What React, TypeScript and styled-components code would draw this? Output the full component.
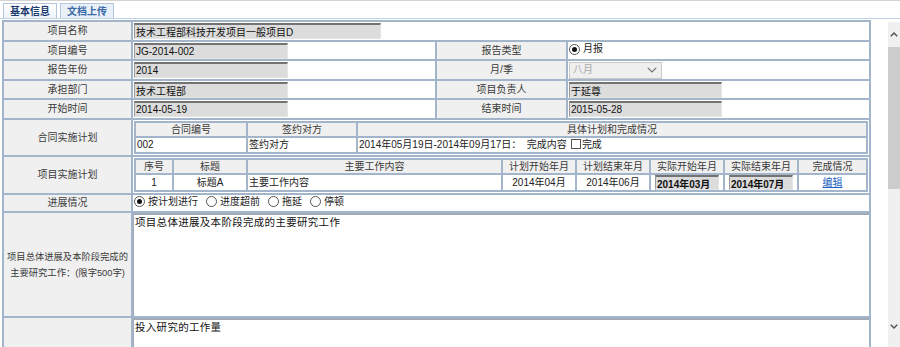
import React from "react";
import styled, { createGlobalStyle } from "styled-components";

const GlobalStyle = createGlobalStyle`
  html, body { margin: 0; padding: 0; background: #fff; overflow: hidden; }
  body {
    font-family: "Liberation Sans", "Noto Sans CJK SC", sans-serif;
    font-size: 10px;
    line-height: 12px;
    color: #222;
  }
  * { box-sizing: border-box; }
`;

const BORDER = "#a3b5cb";

const Page = styled.div`
  width: 900px;
  height: 347px;
  overflow: hidden;
  display: flex;
  flex-direction: column;
`;

const TabBar = styled.div`
  height: 19px;
  padding: 2px 0 0 3px;
  border-top: 1px solid #d4d4d4;
  border-bottom: 1px solid #c3d3e6;
  display: flex;
  gap: 3px;
  align-items: flex-end;
`;

const Tab = styled.div<{ $active?: boolean }>`
  width: 54px;
  height: 15px;
  border: 1px solid #b4c6dc;
  border-bottom: none;
  background: ${(p) => (p.$active ? "linear-gradient(#ffffff, #eef3f9)" : "#e9f0f8")};
  color: ${(p) => (p.$active ? "#1b3a6d" : "#3b6aa6")};
  font-weight: bold;
  font-size: 10px;
  line-height: 14px;
  text-align: center;
  font-family: "Noto Sans CJK SC", sans-serif;
`;

const Body = styled.div`
  flex: 1;
  display: flex;
  min-height: 0;
`;

const Content = styled.div`
  width: 871px;
  padding: 1px 0 0 2px;
  overflow: hidden;
`;

const Spacer = styled.div`
  flex: 1;
`;

const Scrollbar = styled.div`
  width: 12px;
  margin-top: 3px;
  background: #f0f0f0;
  display: flex;
  flex-direction: column;
`;

const ScrollArrow = styled.div<{ $h: number }>`
  height: ${(p) => p.$h}px;
  display: flex;
  align-items: center;
  justify-content: center;
`;

const ScrollThumb = styled.div`
  height: 142px;
  background: #cdcdcd;
`;

const ScrollTrack = styled.div`
  flex: 1;
`;

const FormTable = styled.table`
  width: 867px;
  border-collapse: collapse;
  table-layout: fixed;
  border: 2px solid #93a8c2;
`;

const Cell = styled.td<{ $h?: number; $pad?: string }>`
  border: 2px solid ${BORDER};
  padding: ${(p) => p.$pad ?? "0 1px"};
  height: ${(p) => (p.$h ? `${p.$h}px` : "auto")};
  vertical-align: middle;
  background: #fff;
`;

const LabelCell = styled(Cell)<{ $size?: number }>`
  background: #f0f0f0;
  text-align: center;
  color: #3a3a3a;
  font-size: ${(p) => p.$size ?? 10}px;
  line-height: 16px;
  white-space: nowrap;
`;

const TextBox = styled.input<{ $w: number; $bold?: boolean; $h?: number }>`
  display: block;
  width: ${(p) => p.$w}px;
  height: ${(p) => p.$h ?? 16}px;
  margin: 0;
  padding: 0 1px;
  background: #dcdcdc;
  border: none;
  border-top: 2px solid #737373;
  border-left: 1px solid #9a9a9a;
  border-right: 1px solid #e4e4e4;
  border-bottom: 1px solid #e4e4e4;
  font-family: "Liberation Sans", "Noto Sans CJK SC", sans-serif;
  font-size: 10px;
  font-weight: ${(p) => (p.$bold ? "bold" : "normal")};
  color: #111;
  outline: none;
`;

const SubTable = styled.table`
  width: 100%;
  border-collapse: collapse;
  table-layout: fixed;
`;

const SubHead = styled.td`
  background: #f0f0f0;
  border: 2px solid ${BORDER};
  text-align: center;
  height: 15px;
  padding: 0;
  font-size: 10px;
  line-height: 12px;
  color: #3a3a3a;
`;

const SubCell = styled.td<{ $align?: string }>`
  border: 2px solid ${BORDER};
  text-align: ${(p) => p.$align ?? "left"};
  height: 16px;
  padding: 0 1px;
  font-size: 10px;
  line-height: 12px;
  color: #222;
  white-space: nowrap;
  overflow: hidden;
`;

const RadioLabel = styled.label`
  display: inline-flex;
  align-items: center;
  margin-right: 8px;
  font-size: 10px;
  color: #222;
`;

const RadioDot = styled.span<{ $checked?: boolean }>`
  display: inline-block;
  width: 11px;
  height: 11px;
  border: 1px solid #555;
  border-radius: 50%;
  position: relative;
  margin-right: 3px;
  background: #fff;
  &::after {
    content: "";
    position: absolute;
    left: 2px;
    top: 2px;
    width: 5px;
    height: 5px;
    border-radius: 50%;
    background: #111;
    display: ${(p) => (p.$checked ? "block" : "none")};
  }
`;

const CheckSquare = styled.span`
  display: inline-block;
  width: 10px;
  height: 10px;
  border: 1px solid #555;
  background: #fff;
  margin: 0 1px 0 4px;
  vertical-align: -1px;
`;

const SelectBox = styled.div`
  width: 93px;
  height: 17px;
  border: 1px solid #c9c9c9;
  background: #efefef;
  color: #a9a9a9;
  display: flex;
  align-items: center;
  justify-content: space-between;
  padding: 0 4px 0 3px;
  font-size: 10px;
`;

const EditLink = styled.a`
  color: #2060c0;
  text-decoration: underline;
  font-size: 10px;
  cursor: pointer;
`;

const Memo = styled.textarea<{ $h: number }>`
  display: block;
  width: 100%;
  height: ${(p) => p.$h}px;
  margin: 0;
  padding: 0 1px;
  border: none;
  border-top: 2px solid #a2aab6;
  border-left: 1px solid #a2aab6;
  resize: none;
  overflow: hidden;
  font-family: "Noto Sans CJK SC", sans-serif;
  font-size: 10.5px;
  letter-spacing: 0.3px;
  line-height: 13px;
  color: #111;
  background: #fff;
  outline: none;
`;

const Chevron = ({ up }: { up?: boolean }) => (
  <svg width="8" height="5" viewBox="0 0 8 5">
    <polyline
      points={up ? "0.8,4.2 4,1 7.2,4.2" : "0.8,0.8 4,4 7.2,0.8"}
      fill="none"
      stroke="#505050"
      strokeWidth="1.4"
    />
  </svg>
);

const SelectChevron = () => (
  <svg width="10" height="6" viewBox="0 0 10 6">
    <polyline points="0.8,0.8 5,5 9.2,0.8" fill="none" stroke="#707070" strokeWidth="1.2" />
  </svg>
);

const Radio = ({ checked, children }: { checked?: boolean; children: React.ReactNode }) => (
  <RadioLabel>
    <RadioDot $checked={checked} />
    {children}
  </RadioLabel>
);

export default function App() {
  return (
    <Page>
      <GlobalStyle />
      <TabBar>
        <Tab $active>基本信息</Tab>
        <Tab>文档上传</Tab>
      </TabBar>
      <Body>
        <Content>
          <FormTable>
            <colgroup>
              <col style={{ width: 129 }} />
              <col style={{ width: 304 }} />
              <col style={{ width: 131 }} />
              <col style={{ width: 303 }} />
            </colgroup>
            <tbody>
              <tr>
                <LabelCell $h={20}>项目名称</LabelCell>
                <Cell colSpan={3}>
                  <TextBox $w={247} readOnly value="技术工程部科技开发项目一般项目D" />
                </Cell>
              </tr>
              <tr>
                <LabelCell $h={19}>项目编号</LabelCell>
                <Cell>
                  <TextBox $w={154} readOnly value="JG-2014-002" />
                </Cell>
                <LabelCell>报告类型</LabelCell>
                <Cell>
                  <Radio checked>月报</Radio>
                </Cell>
              </tr>
              <tr>
                <LabelCell $h={20}>报告年份</LabelCell>
                <Cell>
                  <TextBox $w={154} readOnly value="2014" />
                </Cell>
                <LabelCell>月/季</LabelCell>
                <Cell>
                  <SelectBox>
                    <span>八月</span>
                    <SelectChevron />
                  </SelectBox>
                </Cell>
              </tr>
              <tr>
                <LabelCell $h={19}>承担部门</LabelCell>
                <Cell>
                  <TextBox $w={154} readOnly value="技术工程部" />
                </Cell>
                <LabelCell>项目负责人</LabelCell>
                <Cell>
                  <TextBox $w={153} readOnly value="于延尊" />
                </Cell>
              </tr>
              <tr>
                <LabelCell $h={20}>开始时间</LabelCell>
                <Cell>
                  <TextBox $w={154} readOnly value="2014-05-19" />
                </Cell>
                <LabelCell>结束时间</LabelCell>
                <Cell>
                  <TextBox $w={153} readOnly value="2015-05-28" />
                </Cell>
              </tr>
              <tr>
                <LabelCell>合同实施计划</LabelCell>
                <Cell colSpan={3} $pad="1px">
                  <SubTable>
                    <colgroup>
                      <col style={{ width: 112 }} />
                      <col style={{ width: 110 }} />
                      <col />
                    </colgroup>
                    <tbody>
                      <tr>
                        <SubHead>合同编号</SubHead>
                        <SubHead>签约对方</SubHead>
                        <SubHead>具体计划和完成情况</SubHead>
                      </tr>
                      <tr>
                        <SubCell>002</SubCell>
                        <SubCell>签约对方</SubCell>
                        <SubCell>
                          2014年05月19日-2014年09月17日：&nbsp;&nbsp;完成内容
                          <CheckSquare />
                          完成
                        </SubCell>
                      </tr>
                    </tbody>
                  </SubTable>
                </Cell>
              </tr>
              <tr>
                <LabelCell>项目实施计划</LabelCell>
                <Cell colSpan={3} $pad="1px">
                  <SubTable>
                    <colgroup>
                      <col style={{ width: 38 }} />
                      <col style={{ width: 74 }} />
                      <col style={{ width: 255 }} />
                      <col style={{ width: 74 }} />
                      <col style={{ width: 74 }} />
                      <col style={{ width: 74 }} />
                      <col style={{ width: 74 }} />
                      <col />
                    </colgroup>
                    <tbody>
                      <tr>
                        <SubHead>序号</SubHead>
                        <SubHead>标题</SubHead>
                        <SubHead>主要工作内容</SubHead>
                        <SubHead>计划开始年月</SubHead>
                        <SubHead>计划结束年月</SubHead>
                        <SubHead>实际开始年月</SubHead>
                        <SubHead>实际结束年月</SubHead>
                        <SubHead>完成情况</SubHead>
                      </tr>
                      <tr>
                        <SubCell $align="center">1</SubCell>
                        <SubCell $align="center">标题A</SubCell>
                        <SubCell>主要工作内容</SubCell>
                        <SubCell $align="center">2014年04月</SubCell>
                        <SubCell $align="center">2014年06月</SubCell>
                        <SubCell $align="center">
                          <TextBox $w={64} $h={15} $bold readOnly value="2014年03月" style={{ margin: "0 auto" }} />
                        </SubCell>
                        <SubCell $align="center">
                          <TextBox $w={64} $h={15} $bold readOnly value="2014年07月" style={{ margin: "0 auto" }} />
                        </SubCell>
                        <SubCell $align="center">
                          <EditLink>编辑</EditLink>
                        </SubCell>
                      </tr>
                    </tbody>
                  </SubTable>
                </Cell>
              </tr>
              <tr>
                <LabelCell $h={18}>进展情况</LabelCell>
                <Cell colSpan={3}>
                  <Radio checked>按计划进行</Radio>
                  <Radio>进度超前</Radio>
                  <Radio>拖延</Radio>
                  <Radio>停顿</Radio>
                </Cell>
              </tr>
              <tr>
                <LabelCell $h={105} $size={9.3}>
                  项目总体进展及本阶段完成的
                  <br />
                  主要研究工作：(限字500字)
                </LabelCell>
                <Cell colSpan={3} $pad="0">
                  <Memo $h={103} readOnly value="项目总体进展及本阶段完成的主要研究工作" />
                </Cell>
              </tr>
              <tr>
                <LabelCell $h={60}></LabelCell>
                <Cell colSpan={3} $pad="0">
                  <Memo $h={58} readOnly value="投入研究的工作量" />
                </Cell>
              </tr>
            </tbody>
          </FormTable>
        </Content>
        <Spacer />
        <Scrollbar>
          <ScrollArrow $h={25}>
            <Chevron up />
          </ScrollArrow>
          <ScrollThumb />
          <ScrollTrack />
          <ScrollArrow $h={28}>
            <Chevron />
          </ScrollArrow>
          <ScrollArrow $h={7} />
        </Scrollbar>
      </Body>
    </Page>
  );
}
